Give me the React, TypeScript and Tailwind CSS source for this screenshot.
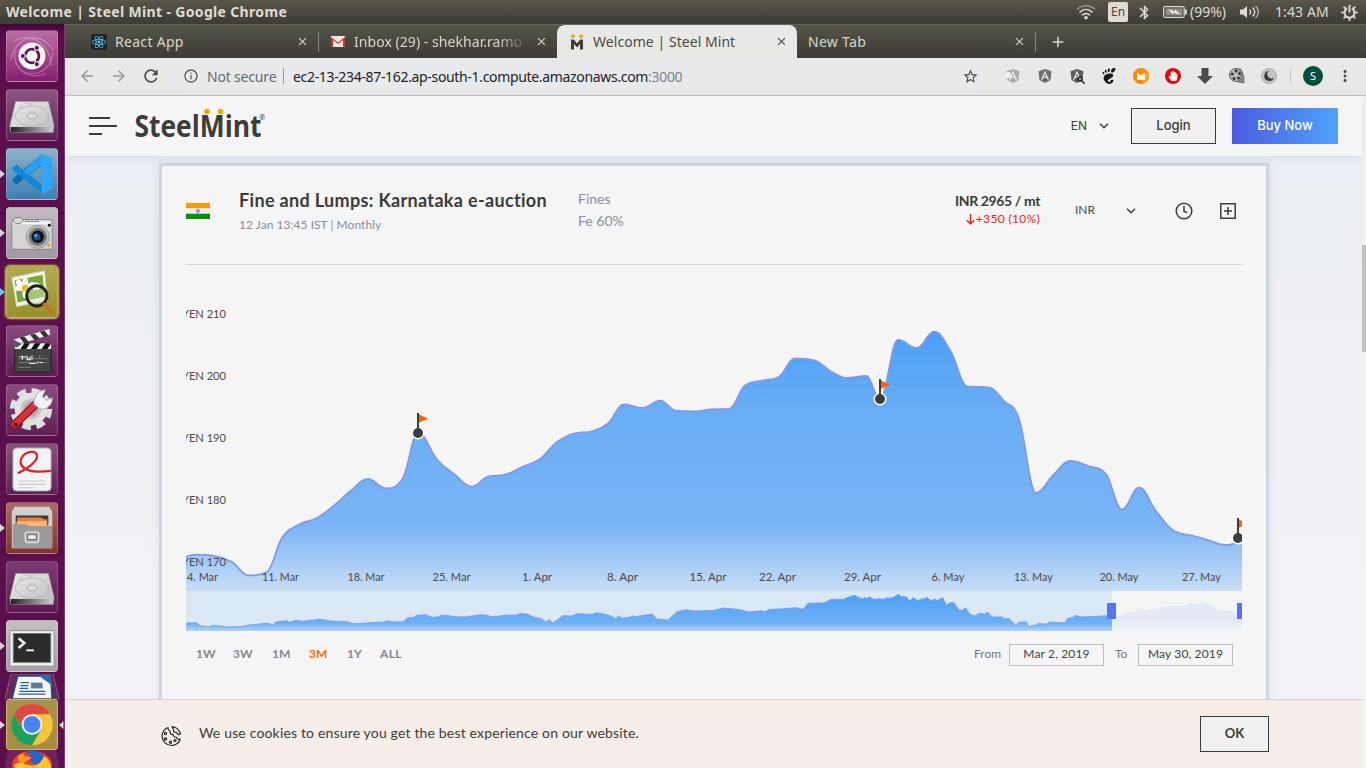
import React from "react";
import { MdArrowBack, MdArrowForward, MdRefresh, MdInfoOutline, MdStarBorder, MdMoreVert, MdClose, MdAdd, MdBluetooth } from "react-icons/md";
import { FaReact, FaAngular, FaHandPaper } from "react-icons/fa";
import { SiGnome } from "react-icons/si";

type Pt = [number, number];

const series: Pt[] = [
  [179, 560], [196, 554.7], [214, 556], [232, 562], [248, 575.3], [267, 572], [282, 538], [299, 524.5], [317, 518], [334, 505.5],
  [351, 490.5], [368, 479], [386, 488.3], [403, 478], [418, 433], [437, 459.5], [454, 474], [472, 486.7], [488, 476.5], [505, 474.7],
  [522, 467], [540, 459], [557, 442], [575, 433.3], [592, 431.3], [608, 423.5], [624, 404.5], [643, 408], [660, 400.7], [676, 410.7],
  [695, 411.3], [711, 409.3], [729, 408.8], [745, 385.5], [762, 380.7], [779, 376.7], [795, 358.5], [815, 360.5], [831, 371.5],
  [847, 378], [866, 376], [880, 399], [898, 340], [917, 348], [934, 331.7], [951, 352], [967, 386.3], [989, 387.3], [1004, 401],
  [1019, 419], [1036, 493], [1053, 475.5], [1070, 461], [1088, 466], [1106, 474], [1122, 509.7], [1139, 487.7], [1156, 511],
  [1174, 531], [1191, 535.3], [1208, 540], [1225, 545], [1242, 541],
];

const overviewLeft: Pt[] = [
  [15, 129], [40, 128], [50, 138], [60, 138], [70, 142], [78, 137], [100, 138], [110, 141], [150, 140], [175, 134], [215, 130],
  [228, 135], [236, 125], [262, 122], [268, 127], [284, 121], [300, 124], [345, 118], [370, 123], [410, 125], [425, 131], [500, 126],
  [508, 122], [520, 126], [547, 125], [557, 114], [572, 112], [580, 106], [600, 104], [618, 112], [632, 111], [640, 106], [655, 106],
  [670, 110], [700, 111], [735, 104], [755, 106], [760, 110], [778, 109], [795, 106], [825, 105], [835, 100], [852, 103], [865, 111],
  [885, 116], [897, 127], [903, 119], [915, 128], [938, 107], [960, 108], [972, 101], [1010, 103], [1022, 98], [1050, 105],
  [1068, 116], [1074, 108], [1082, 114], [1098, 113], [1108, 107], [1114, 111], [1130, 107], [1157, 102], [1168, 117], [1195, 120],
  [1218, 95], [1240, 89], [1260, 93], [1310, 91], [1330, 84], [1365, 88], [1395, 96], [1423, 92], [1432, 95], [1445, 88], [1468, 87],
];
const overviewRight: Pt[] = [
  [0, 327], [42, 323], [62, 328], [75, 310], [120, 308], [137, 298], [170, 298], [186, 290], [200, 286], [210, 292], [220, 297],
  [229, 292], [232, 296], [240, 290], [250, 298], [265, 296], [275, 298], [285, 294], [300, 294], [317, 283], [325, 290], [338, 290],
  [345, 301], [350, 300], [357, 293], [368, 302], [380, 296], [385, 298], [393, 292], [405, 302], [413, 297], [420, 302], [436, 293],
  [445, 316], [455, 308], [465, 308], [480, 331], [488, 330], [497, 324], [508, 343], [520, 348], [537, 339], [547, 343], [555, 336],
  [562, 345], [570, 351], [595, 351], [600, 356], [613, 356], [632, 377], [638, 367], [660, 366], [667, 382], [675, 376], [685, 376],
  [692, 370], [712, 373], [722, 366], [762, 369], [770, 355], [782, 353], [792, 346], [805, 351], [850, 349], [888, 346], [915, 347],
  [930, 338], [948, 335], [965, 325], [975, 331], [1000, 328], [1040, 318], [1080, 318], [1100, 309], [1115, 313], [1125, 306],
  [1138, 307], [1150, 318], [1160, 320], [1170, 333], [1180, 328], [1195, 334], [1205, 331], [1218, 341], [1236, 342],
];
const overview: Pt[] = [
  ...overviewLeft.map(([x, y]): Pt => [180 + x / 2.45, 580 + y / 3]),
  ...overviewRight.map(([x, y]): Pt => [780 + x / 2.676, 500 + y / 3]),
];

function spline(p: Pt[]): string {
  let d = `M${p[0][0]} ${p[0][1]}`;
  let outX = p[0][0];
  let outY = p[0][1];
  for (let i = 1; i < p.length; i++) {
    const [x, y] = p[i];
    const [lx, ly] = p[i - 1];
    let inX = x, inY = y, nextX = x, nextY = y;
    if (i < p.length - 1) {
      const [nx, ny] = p[i + 1];
      inX = (1.5 * x + lx) / 2.5;
      inY = (1.5 * y + ly) / 2.5;
      nextX = (1.5 * x + nx) / 2.5;
      nextY = (1.5 * y + ny) / 2.5;
      const c = ((nextY - inY) * (nextX - x)) / (nextX - inX) + y - nextY;
      inY += c;
      nextY += c;
      if (inY > ly && inY > y) { inY = Math.max(ly, y); nextY = 2 * y - inY; }
      else if (inY < ly && inY < y) { inY = Math.min(ly, y); nextY = 2 * y - inY; }
      if (nextY > ny && nextY > y) { nextY = Math.max(ny, y); inY = 2 * y - nextY; }
      else if (nextY < ny && nextY < y) { nextY = Math.min(ny, y); inY = 2 * y - nextY; }
    }
    d += `C${outX} ${outY} ${inX} ${inY} ${x} ${y}`;
    outX = nextX;
    outY = nextY;
  }
  return d;
}

const line = spline(series);
const overviewLine = "M" + overview.map(([x, y]) => `${x.toFixed(1)} ${y.toFixed(1)}`).join("L");

const yLabels: [string, number][] = [["YEN 210", 318], ["YEN 200", 380], ["YEN 190", 442], ["YEN 180", 504], ["YEN 170", 566]];
const xLabels: [string, number, number][] = [
  ["4. Mar", 202.5, 31], ["11. Mar", 280.5, 37], ["18. Mar", 366, 37], ["25. Mar", 451.5, 38], ["1. Apr", 537, 30], ["8. Apr", 622.5, 31],
  ["15. Apr", 708, 37], ["22. Apr", 777.5, 37], ["29. Apr", 862.5, 37], ["6. May", 948, 33], ["13. May", 1033.5, 39],
  ["20. May", 1119, 39], ["27. May", 1201.5, 39],
];

function Flag({ x, y }: { x: number; y: number }) {
  return (
    <g>
      <circle cx={x} cy={y} r="6.5" fill="#fff" />
      <path d={`M${x} ${y - 19}L${x + 10} ${y - 14.3}L${x} ${y - 10}Z`} fill="#ff6200" />
      <rect x={x - 1} y={y - 20} width="2" height="18" fill="#3c3c3b" />
      <circle cx={x} cy={y} r="5" fill="#3c3c3b" />
    </g>
  );
}

function Chart() {
  return (
    <svg viewBox="186 265 1056 366" className="block h-[366px] w-[1056px] overflow-hidden font-['Lato','Noto_Sans',sans-serif]">
      <defs>
        <linearGradient id="area" gradientUnits="userSpaceOnUse" x1="0" y1="331" x2="0" y2="591">
          <stop offset="0" stopColor="#4ba0f5" />
          <stop offset="0.3" stopColor="#68adf5" />
          <stop offset="0.75" stopColor="#7ab5f5" />
          <stop offset="1" stopColor="#c8ddf5" />
        </linearGradient>
        <linearGradient id="mini" gradientUnits="userSpaceOnUse" x1="0" y1="594" x2="0" y2="631">
          <stop offset="0" stopColor="#4ba0f5" />
          <stop offset="0.8" stopColor="#70b0f5" />
          <stop offset="1" stopColor="#b4d3f7" />
        </linearGradient>
        <linearGradient id="faded" gradientUnits="userSpaceOnUse" x1="0" y1="600" x2="0" y2="631">
          <stop offset="0" stopColor="#e0e9f5" />
          <stop offset="0.7" stopColor="#e5ebf5" />
          <stop offset="1" stopColor="#f0f2f5" />
        </linearGradient>
        <clipPath id="leftClip"><rect x="186" y="591" width="926" height="40" /></clipPath>
        <clipPath id="rightClip"><rect x="1112" y="591" width="130" height="40" /></clipPath>
      </defs>
      <path d={`${line}L1242 591L179 591Z`} fill="url(#area)" />
      <path d={line} fill="none" stroke="#8099e8" strokeWidth="1.8" />
      <rect x="186" y="591" width="926" height="40" fill="#dae7f5" />
      <g clipPath="url(#leftClip)">
        <path d={`${overviewLine}L1242 631L186 631Z`} fill="url(#mini)" />
        <path d={overviewLine} fill="none" stroke="#7d9ee8" strokeWidth="0.9" />
      </g>
      <path d={`${overviewLine}L1242 631L186 631Z`} fill="url(#faded)" clipPath="url(#rightClip)" />
      <rect x="1107" y="603" width="9" height="16" fill="#5574f2" />
      <rect x="1237" y="603" width="9" height="16" fill="#5574f2" />
      <g fill="#4a4a4a" fontSize="11">
        {yLabels.map(([t, y]) => (
          <text key={t} x="182" y={y} textLength="44" lengthAdjust="spacingAndGlyphs">{t}</text>
        ))}
        {xLabels.map(([t, x, w]) => (
          <text key={t} x={x - w / 2} y="581" textLength={w} lengthAdjust="spacingAndGlyphs">{t}</text>
        ))}
      </g>
      <Flag x={418} y={433} />
      <Flag x={880} y={399} />
      <Flag x={1238} y={538} />
    </svg>
  );
}

function Drive() {
  return (
    <svg viewBox="0 0 52 52" className="h-full w-full">
      <defs>
        <linearGradient id="drv" x1="0" y1="0" x2="1" y2="1"><stop stopColor="#eee" /><stop offset="1" stopColor="#b9b9b9" /></linearGradient>
        <linearGradient id="drvf" x1="0" x2="1"><stop stopColor="#222" /><stop offset="0.3" stopColor="#555" /><stop offset="1" stopColor="#ccc" /></linearGradient>
      </defs>
      <path d="M9 12h34l6 25-1 7H4l-1-7z" fill="url(#drv)" stroke="#999" strokeWidth=".6" />
      <path d="M4 38.500h44v5.500H4z" fill="url(#drvf)" />
      <ellipse cx="26" cy="27" rx="17.500" ry="10.500" fill="none" stroke="#b4b4b4" strokeWidth=".9" />
      <ellipse cx="26" cy="27" rx="5.500" ry="3" fill="#ddd" stroke="#aaa" />
      <path d="M12 19l4-5h10M11 19l10-2 8-4" fill="none" stroke="#c5c5c5" />
    </svg>
  );
}

function UbuntuIcon() {
  return (
    <svg viewBox="0 0 52 52" className="h-full w-full">
      <path d="M4 30C8 6 34-2 48 20M8 10C22 2 44 10 46 36M48 22C46 46 18 52 10 34M40 44C22 52 6 40 8 20" fill="none" stroke="#fff" strokeOpacity=".3" strokeWidth="1.200" />
      <circle cx="26" cy="26" r="14" fill="#f7f4f6" />
      <circle cx="26" cy="26" r="7.200" fill="none" stroke="#5e1a4e" strokeWidth="2.800" strokeDasharray="13.600 1.500" strokeDashoffset="-8" />
      <g fill="#5e1a4e" stroke="#f7f4f6" strokeWidth="1">
        <circle cx="16.500" cy="26" r="2.600" /><circle cx="31" cy="17.500" r="2.600" /><circle cx="31" cy="34.500" r="2.600" />
      </g>
    </svg>
  );
}

function CodeIcon() {
  return (
    <svg viewBox="0 0 52 52" className="h-full w-full">
      <path d="M5 33l5 4L37 16V5L8 29z" fill="#0a6ab5" />
      <path d="M5 20l5-4 27 22v8L7 23z" fill="#1088d4" />
      <path d="M36 5l11 5v31l-11 6V16L22 27l-5-4z" fill="#2b9ff0" />
      <path d="M36 5l11 5v31l-11 6z" fill="#2fa6f3" />
    </svg>
  );
}

function CameraIcon() {
  return (
    <svg viewBox="0 0 52 52" className="h-full w-full">
      <rect x="5" y="12" width="42" height="31" rx="2" fill="#d5d4d4" stroke="#888" />
      <path d="M6 14h39v3H6z" fill="#f4f4f4" />
      <ellipse cx="11.500" cy="13" rx="5" ry="3" fill="#ddd" stroke="#777" />
      <path d="M19 14h14" stroke="#555" strokeDasharray="2 1" />
      <circle cx="32" cy="30" r="12" fill="#bbb" stroke="#999" />
      <circle cx="32" cy="30" r="9.500" fill="#777" />
      <circle cx="32" cy="30" r="6.500" fill="#111" />
      <circle cx="31" cy="30" r="3.800" fill="#1c4f9c" />
      <circle cx="30" cy="28.500" r="1.300" fill="#8ab8f0" />
      <circle cx="44" cy="18" r="1.500" fill="#111" /><path d="M42 37h3v3h-3z" fill="#f19a25" />
    </svg>
  );
}

function ViewerIcon() {
  return (
    <svg viewBox="0 0 52 52" className="h-full w-full">
      <path d="M5 11l34-7 3 31-32 6z" fill="#f4f4ee" stroke="#ccc" />
      <path d="M8 14l29-6 2 23-28 6z" fill="#78a83c" />
      <g fill="#fff">
        <ellipse cx="19" cy="16" rx="3" ry="5" /><ellipse cx="19" cy="28" rx="3" ry="4.500" />
        <ellipse cx="13" cy="22" rx="4.500" ry="3" /><ellipse cx="25" cy="19" rx="4.500" ry="3" transform="rotate(-25 25 19)" />
        <ellipse cx="13" cy="17" rx="4" ry="3" transform="rotate(40 13 17)" /><ellipse cx="30" cy="20" rx="5" ry="4" />
      </g>
      <circle cx="19" cy="22" r="3.500" fill="#ecc01d" />
      <circle cx="31" cy="30" r="10.500" fill="#dcecc0" fillOpacity=".45" stroke="#222" strokeWidth="3" />
      <path d="M39 39l8 8" stroke="#c1752a" strokeWidth="4" strokeLinecap="round" />
    </svg>
  );
}

function ClapperIcon() {
  return (
    <svg viewBox="0 0 52 52" className="h-full w-full">
      <path d="M7 14L44 3l1 6L9 20z" fill="#eee" />
      <path d="M13 12l5 6 5-1-5-6zM24 9l5 6 5-2-5-5zM34 6l5 6 4-2-4-5z" fill="#333" />
      <rect x="8" y="18" width="38" height="30" rx="1.500" fill="#444" stroke="#222" />
      <path d="M8 18h38v6H8z" fill="#eee" />
      <path d="M18 18l-4 6h6l4-6zM29 18l-4 6h6l4-6zM40 18l-4 6h6l4-6z" fill="#111" />
      <path d="M7 14l8 5-6 4z" fill="#555" />
      <path d="M12 34h30M12 38h30M12 43h13M34 30v4" stroke="#888" strokeWidth=".8" />
      <path d="M13 32h7m-4-1v4m5-4v4h3v-3m2 3v-4m-3 8h7m2-2v2m2-1h3" stroke="#eee" strokeWidth="1.200" fill="none" />
    </svg>
  );
}

function SettingsIcon() {
  return (
    <svg viewBox="0 0 52 52" className="h-full w-full">
      <circle cx="25" cy="25" r="18" fill="none" stroke="#dedede" strokeWidth="8" strokeDasharray="8.500 5.640" />
      <circle cx="25" cy="25" r="14" fill="#c9c9c9" stroke="#e2e2e2" strokeWidth="6" />
      <circle cx="25" cy="25" r="8" fill="#b5a7b2" />
      <path d="M8 41L31 19" stroke="#991218" strokeWidth="8.500" strokeLinecap="round" />
      <path d="M8 41L31 19" stroke="#d8333a" strokeWidth="6" strokeLinecap="round" />
      <path d="M28 20c-1-8 5-15 12-15l-3 7 4 4 6-3c1 8-6 13-13 12z" fill="#f1f1f1" stroke="#999" strokeWidth=".8" />
      <circle cx="9" cy="41" r="2" fill="#6d0d12" />
    </svg>
  );
}

function PdfIcon() {
  return (
    <svg viewBox="0 0 52 52" className="h-full w-full">
      <rect x="6" y="4" width="40" height="45" rx="4" fill="#f3f3f3" stroke="#8a8a8a" />
      <path d="M12 30C22 26 33 17 31 11c-2-5-13-3-16 4-4 10 7 16 30 13" fill="none" stroke="#d8272e" strokeWidth="2.400" strokeLinecap="round" />
      <path d="M12 38.500h28M12 42h28M12 45.500h17" stroke="#c8c8c8" strokeWidth="1.200" />
    </svg>
  );
}

function FilesIcon() {
  return (
    <svg viewBox="0 0 52 52" className="h-full w-full">
      <path d="M8 4h36l3 5v38H5V9z" fill="#d0d0d0" />
      <rect x="9" y="13" width="34" height="10" fill="#3b3b3b" />
      <path d="M11 15h25l2 2h4v7H9z" fill="#e8823a" /><path d="M11 19h30v5H11z" fill="#f5b47c" />
      <path d="M6 22h14l2 2h25v21a2 2 0 01-2 2H8a2 2 0 01-2-2z" fill="#9a9a9a" />
      <rect x="19" y="30" width="14" height="11" rx="2" fill="#a9a9a9" stroke="#ddd" strokeWidth="1.500" />
      <rect x="21.500" y="33" width="9" height="5" fill="#eee" stroke="#666" />
    </svg>
  );
}

function TerminalIcon() {
  return (
    <svg viewBox="0 0 52 52" className="h-full w-full">
      <rect x="3" y="10" width="46" height="37" rx="1" fill="#f1f1f1" stroke="#888" />
      <rect x="6.500" y="13" width="39" height="30" fill="#2c2c2c" stroke="#777" />
      <path d="M12 18l6 5-6 5" fill="none" stroke="#eee" strokeWidth="2.600" /><path d="M20 30.500h8" stroke="#eee" strokeWidth="2" />
    </svg>
  );
}

function ChromeIcon() {
  return (
    <svg viewBox="0 0 52 52" className="h-full w-full">
      <circle cx="26" cy="26" r="22" fill="#f2c63c" />
      <path d="M6.900 15A22 22 0 0145.100 15H26L16.500 31.500z" fill="#dd4b3e" />
      <path d="M6.900 15A22 22 0 0026 48L35.500 31.500 16.500 31.500z" fill="#1fa15d" />
      <circle cx="26" cy="26" r="11" fill="#f3f3f3" /><circle cx="26" cy="26" r="9" fill="#4684ee" />
    </svg>
  );
}

const launcher: { el: React.ReactNode; tile: string; arrow?: string }[] = [
  { el: <UbuntuIcon />, tile: "bg-linear-to-b from-[#b96da3] to-[#861a70]" },
  { el: <Drive />, tile: "bg-linear-to-b from-[#8d5584] to-[#5d2052]" },
  { el: <CodeIcon />, tile: "bg-linear-to-b from-[#8eb0cb] to-[#3c7fae]", arrow: "text-[#d8d5d6]" },
  { el: <CameraIcon />, tile: "bg-linear-to-b from-[#c2bdc2] to-[#a297a2]", arrow: "text-[#d8d5d6]" },
  { el: <ViewerIcon />, tile: "bg-linear-to-b from-[#b0ac4c] to-[#969129] shadow-[0_0_2px_1px_#d9cf4a]", arrow: "text-[#6fc3ee]" },
  { el: <ClapperIcon />, tile: "bg-linear-to-b from-[#8c4c81] to-[#5b1a50]" },
  { el: <SettingsIcon />, tile: "bg-linear-to-b from-[#8c4c81] to-[#5f1f53]" },
  { el: <PdfIcon />, tile: "bg-linear-to-b from-[#8c5080] to-[#5f2053]" },
  { el: <FilesIcon />, tile: "bg-linear-to-b from-[#a56b64] to-[#853329]", arrow: "text-[#d8d5d6]" },
  { el: <Drive />, tile: "bg-linear-to-b from-[#7c3a72] to-[#5d1a52]" },
  { el: <TerminalIcon />, tile: "bg-linear-to-b from-[#c5bfc4] to-[#a79fa6]", arrow: "text-[#d8d5d6]" },
];

function Arrow({ tone, flip }: { tone?: string; flip?: boolean }) {
  return (
    <svg viewBox="0 0 6 8" className={`h-2 w-[6px] shrink-0 ${tone ?? "invisible"}`}>
      <path d={flip ? "M5.500 0v8L1 4z" : "M0 0v8L5 4z"} fill="currentColor" />
    </svg>
  );
}

function Launcher() {
  return (
    <aside className="flex h-full w-[65px] shrink-0 flex-col overflow-hidden border-r border-[#7b3a70] bg-linear-to-b from-[#3c0a33] via-[#5b0f4d] via-[2%] to-[#5b0f4d] pt-[6px]">
      <div className="flex flex-col gap-[7px]">
        {launcher.map((item, i) => (
          <div key={i} className="flex items-center">
            <Arrow tone={item.arrow} />
            <div className={`h-[52px] w-[52px] rounded-[4px] border border-white/20 ${item.tile}`}>{item.el}</div>
          </div>
        ))}
      </div>
      <svg viewBox="0 0 56 26" className="ml-1 mt-[2px] block h-[25px] w-14 shrink-0">
        <path d="M6 0h44l6 26H0z" fill="#66275b" stroke="#9b6a93" strokeWidth=".8" />
        <path d="M13 2h28l7 7 1 17H7z" fill="#f5f5f5" stroke="#1b4f80" strokeWidth="1.800" />
        <path d="M34 1h13l2 11z" fill="#2e6da0" />
        <path d="M16 9h9M16 12h8M15 15h9M15 18h27M14 21h28" stroke="#2b6290" strokeWidth="1.300" /><path d="M27 9h12v6H27z" fill="#567e9c" />
      </svg>
      <div className="flex items-center">
        <Arrow tone="text-[#d8d5d6]" />
        <div className="h-[51px] w-[52px] rounded-[3px] border border-[#cbb672] bg-linear-to-b from-[#a9914d] to-[#a58c42]"><ChromeIcon /></div>
        <Arrow tone="text-[#d8d5d6]" flip />
      </div>
      <svg viewBox="0 0 56 22" className="ml-1 block h-[22px] w-14 shrink-0">
        <path d="M4 0h48l4 22H0z" fill="#6f2460" />
        <ellipse cx="28" cy="15" rx="20" ry="14" fill="#e8412d" />
        <path d="M22 2c8-3 17 0 20 8l-8 5-8-3 2-5z" fill="#2365c8" />
        <path d="M20 2c-3 4 3 5 7 5-2 4-6 3-7 7-5-1-7-4-6-8z" fill="#f79a20" />
        <path d="M10 15c5-4 10-1 14 0 7 2 12 0 16-9 6 3 8 10 7 16H12z" fill="#ffc52e" />
      </svg>
    </aside>
  );
}

function SystemBar() {
  return (
    <div className="flex h-6 shrink-0 items-center justify-between bg-linear-to-b from-[#5a564b] to-[#3d3b36] text-[#dfdbd2]">
      <div className="w-[300px] whitespace-nowrap pl-[6px] text-[14px] font-bold leading-6 tracking-[0.34px]">Welcome | Steel Mint - Google Chrome</div>
      <div className="flex h-6 items-center pr-2 text-[14px]">
        <svg viewBox="0 0 20 16" className="mr-3 h-4 w-5" fill="none" stroke="currentColor" strokeWidth="1.600">
          <path d="M1 5.500c5-5 13-5 18 0" opacity=".5" /><path d="M3.500 8.500c4-4 9-4 13 0M6 11.300c2.500-2.500 5.500-2.500 8 0" /><circle cx="10" cy="13.800" r="1" fill="currentColor" />
        </svg>
        <span className="mr-2 flex h-5 w-5 items-center justify-center rounded-[2px] bg-[#dfdbd2] text-[12px] text-[#4a4842]">En</span>
        <MdBluetooth className="mr-[10px] h-[17px] w-[17px]" />
        <svg viewBox="0 0 24 12" className="mr-[3px] h-3 w-6"><rect x=".7" y=".7" width="20.500" height="10.600" rx="1.500" fill="none" stroke="currentColor" strokeWidth="1.200" /><rect x="2.500" y="2.500" width="17" height="7" fill="#918e86" /><path d="M22 3.500h1.800v5H22z" fill="currentColor" /><path d="M5 3l7 2.500V3.300L17.500 9 10 6.500v2z" fill="#eee" /></svg>
        <span className="w-[38px] pb-px">(99%)</span>
        <svg viewBox="0 0 20 16" className="ml-3 h-4 w-5" fill="none" stroke="currentColor" strokeWidth="1.400">
          <path d="M0 5.500h3L7 2v12L3 10.500H0z" fill="currentColor" stroke="none" /><path d="M9.500 5.500c1.500 1.500 1.500 3.500 0 5M12.500 3.500c3 3 3 6 0 9" /><path d="M15.500 2c4 4 4 8 0 12" opacity=".7" />
        </svg>
        <span className="ml-[15px] w-[55px] whitespace-nowrap pb-px tracking-[0.1px]">1:43 AM</span>
        <svg viewBox="0 0 18 18" className="ml-[11px] h-[17px] w-[17px]" fill="none" stroke="currentColor"><path d="M6.500 4.500a5.300 5.300 0 105 0" strokeWidth="2.200" /><path d="M9 1v8" strokeWidth="2" /><path d="M9 15v3M0 9h3M15 9h3M2.700 15.300L4.800 13.200M15.300 15.300l-2.100-2.100M2.700 2.700l2.100 2.100M15.300 2.700l-2.100 2.100" strokeWidth="1.800" /></svg>
      </div>
    </div>
  );
}

function MintMark() {
  return (
    <svg viewBox="0 0 16 16" className="h-4 w-4 shrink-0">
      <path d="M2 15.500V5.500h3l3 4 3-4h3v10h-3V10l-3 3.500L5 10v5.500z" fill="#3f3f42" /><circle cx="3.800" cy="2.200" r="1.900" fill="#e5b015" /><circle cx="12.200" cy="2.200" r="1.900" fill="#e5b015" />
    </svg>
  );
}

function Tabs() {
  return (
    <div className="flex h-[34px] shrink-0 items-center border-t border-[#66665b] bg-linear-to-b from-[#55554a] to-[#3c3b36] text-[14px] text-[#d7d6c8]">
      <div className="flex h-full w-[254px] items-center border-[#8a887c] pl-[26px]">
        <span className="flex h-4 w-4 items-center justify-center rounded-[2px] bg-[#20232a]"><FaReact className="h-[14px] w-[14px] text-[#61dafb]" /></span>
        <span className="ml-2 flex-1 pb-px tracking-[0.3px]">React App</span>
        <MdClose className="mr-[9px] h-[13px] w-[13px]" />
        <span className="h-5 w-px bg-[#8a887c]" />
      </div>
      <div className="flex h-full w-[238px] items-center pl-3">
        <svg viewBox="0 0 14 11" className="h-[11px] w-[14px]"><path d="M0 0h14v11H0z" fill="#e8e8e8" /><path d="M0 11V1l7 5.500L14 1v10h-2V4L7 8 2 4v7z" fill="#d93025" /></svg>
        <span className="ml-[9px] w-[174px] overflow-hidden whitespace-nowrap pb-px tracking-[0.05px] [mask-image:linear-gradient(to_right,#000_82%,transparent)]">Inbox (29) - shekhar.ramo</span>
        <MdClose className="ml-[7px] h-[13px] w-[13px]" />
      </div>
      <div className="flex h-full w-[240px] items-center rounded-t-lg bg-[#e8e8e6] pl-3 text-[#4c4a45]">
        <MintMark />
        <span className="ml-2 flex-1 pb-px tracking-[0.05px]">Welcome | Steel Mint</span>
        <MdClose className="mr-[9px] h-[13px] w-[13px]" />
      </div>
      <div className="flex h-full w-[239px] items-center pl-[11px]">
        <span className="flex-1 pb-px tracking-[0.3px]">New Tab</span>
        <MdClose className="mr-[9px] h-[13px] w-[13px]" />
        <span className="h-5 w-px bg-[#8a887c]" />
      </div>
      <MdAdd className="ml-[13px] h-[18px] w-[18px]" />
    </div>
  );
}

function Toolbar() {
  return (
    <div className="flex h-[38px] shrink-0 items-center border-b border-[#c5c5c2] bg-[#e8e8e6] pb-px pl-[13px] pr-3 text-[#4a4a48]">
      <MdArrowBack className="h-[18px] w-[18px] text-[#9b9b98]" />
      <MdArrowForward className="ml-[14px] h-[18px] w-[18px] text-[#9b9b98]" />
      <MdRefresh className="ml-[13px] h-5 w-5" />
      <div className="ml-[4px] flex h-7 w-[825px] items-center rounded-full bg-[#e7e9eb] pl-[18px] pr-[11px] text-[14px]">
        <MdInfoOutline className="h-4 w-4 text-[#5a5c5f]" />
        <span className="ml-2 w-[69px] whitespace-nowrap tracking-[-0.18px] text-[#66686b]">Not secure</span>
        <span className="ml-[7px] mr-[9px] h-4 w-px bg-[#96989b]" />
        <span className="whitespace-nowrap tracking-[-0.33px] text-[#201f24]">ec2-13-234-87-162.ap-south-1.compute.amazonaws.com<span className="text-[#808285]">:3000</span></span>
        <MdStarBorder className="ml-auto h-[17px] w-[17px]" />
      </div>
      <div className="ml-[15px] flex items-center gap-4">
        <span className="relative flex h-4 w-4 items-center justify-center text-[#ababab]"><FaAngular className="h-4 w-4" /><span className="absolute left-0 top-1 h-[6px] w-[6px] rounded-full bg-[#f3f3f3]" /></span>
        <FaAngular className="h-4 w-4 text-[#6d6d6d]" />
        <span className="relative flex h-4 w-4 text-[#5c5c5c]"><FaAngular className="h-4 w-4" /><svg viewBox="0 0 8 8" className="absolute bottom-0 right-0 h-2 w-2" fill="none" stroke="#222" strokeWidth="1.500"><circle cx="3" cy="3" r="2" fill="#aaa" /><path d="M4.500 4.500L8 8" /></svg></span>
        <SiGnome className="h-4 w-4 text-[#151515]" />
        <svg viewBox="0 0 16 16" className="h-4 w-4"><circle cx="8" cy="8" r="8" fill="#f78a08" /><path d="M8 8l4-4 4 4-5 7z" fill="#ffb10a" /><path d="M4 4.500l4 3 4-3V12H4z" fill="#fff3dc" /></svg>
        <span className="flex h-4 w-4 items-center justify-center rounded-full bg-[#e40613] text-white"><FaHandPaper className="h-[10px] w-[10px]" /></span>
        <svg viewBox="0 0 16 16" className="h-4 w-4"><path d="M4.500 0h7v8H16l-8 8-8-8h4.500z" fill="#4c4c4c" /></svg>
        <svg viewBox="0 0 16 16" className="h-4 w-4"><circle cx="7" cy="7" r="6.500" fill="#bbb" stroke="#555" /><g fill="#333"><circle cx="7" cy="3" r="1.500" /><circle cx="3.300" cy="6" r="1.500" /><circle cx="5" cy="10.500" r="1.500" /><circle cx="9.500" cy="10" r="1.500" /><circle cx="10.500" cy="5.500" r="1.500" /></g><path d="M9 1h3l3 8v6l-6-1 3-3V5z" fill="#8a8a8a" stroke="#555" strokeWidth=".6" /></svg>
        <svg viewBox="0 0 16 16" className="h-4 w-4"><circle cx="8" cy="8" r="7.600" fill="#c4c4c4" stroke="#aaa" strokeWidth=".8" /><path d="M8 3a5 5 0 105 6.500A4 4 0 018 3z" fill="#3f3f3f" /></svg>
      </div>
      <span className="ml-[13px] h-4 w-px bg-[#c5c5c2]" />
      <span className="ml-3 flex h-5 w-5 items-center justify-center rounded-full bg-[#00503d] text-[11px] text-white">S</span>
      <MdMoreVert className="ml-auto h-[18px] w-[18px]" />
    </div>
  );
}

function Chevron({ className }: { className: string }) {
  return (
    <svg viewBox="0 0 10 6" className={`h-[6px] w-[10px] ${className}`} fill="none" stroke="#3c3c3b" strokeWidth="1.500"><path d="M1 .8l4 4 4-4" /></svg>
  );
}

function SiteHeader() {
  return (
    <header className="flex h-[60px] shrink-0 items-center bg-[#f5f5f5] pl-6 pr-6 font-['Lato','Noto_Sans',sans-serif] text-[#3c3c3b] shadow-[0_1px_9px_rgba(90,90,150,.13)]">
      <svg viewBox="0 0 28 18" className="h-[18px] w-7" fill="#3c3c3b"><path d="M0 0h21v2H0zM0 8h28v2H0zM0 16h13v2H0z" /></svg>
      <svg viewBox="134 106 132 40" className="ml-[17px] h-10 w-[132px] font-['Open_Sans','Noto_Sans',sans-serif]" fill="#3c3c3b">
        <text x="134.500" y="136.500" fontSize="30" fontWeight="700" textLength="127" lengthAdjust="spacingAndGlyphs">SteelMint</text>
        <circle cx="207" cy="111.500" r="2.800" fill="#e5ac00" /><circle cx="220.500" cy="111.500" r="2.800" fill="#e5ac00" />
        <text x="259" y="120" fontSize="7.500">®</text>
      </svg>
      <span className="ml-auto text-[12px] font-['Inter',sans-serif]">EN</span>
      <Chevron className="ml-3" />
      <button className="ml-[22px] flex h-9 w-[85px] items-center justify-center border border-[#3c3c3b] bg-[#f1f1f1] font-['Inter',sans-serif] text-[13px] font-medium">Login</button>
      <button className="ml-4 flex h-9 w-[106px] items-center justify-center bg-linear-to-r from-[#4b5ae0] to-[#4ea2f8] font-['Inter',sans-serif] text-[13px] font-medium text-white">Buy Now</button>
    </header>
  );
}

function ChartCard() {
  return (
    <section className="ml-[94px] mt-[7px] h-[560px] w-[1110px] shrink-0 border-[3px] border-[#ced7e0] bg-[#f5f5f5] px-6 shadow-[0_0_8px_rgba(90,110,140,.15)]">
      <div className="flex h-[99px] border-b border-[#d3d5dc]">
        <svg viewBox="0 0 24 16" className="mt-[37px] h-4 w-6 shrink-0"><path d="M0 0h24v5.500H0z" fill="#f79a00" /><path d="M0 5.300h24V11H0z" fill="#f0f0f0" /><path d="M0 10.700h24V16H0z" fill="#039403" /><path d="M12 5.300L14.700 8 12 10.700 9.300 8z" fill="#a58bd0" /></svg>
        <div className="ml-[29px] mt-[22px] w-[339px] shrink-0">
          <h2 className="whitespace-nowrap text-[18px] font-bold leading-6 tracking-[0.33px] text-[#3c3c3b]">Fine and Lumps: Karnataka e-auction</h2>
          <p className="mt-[5px] text-[12px] leading-4 tracking-[0.04px] text-[#8a8d9a]">12 Jan 13:45 IST | Monthly</p>
        </div>
        <div className="mt-[22px] text-[14px] leading-[22px] text-[#8a8d9a]">
          <p>Fines</p>
          <p>Fe 60%</p>
        </div>
        <div className="ml-auto mr-[35px] mt-[25px] text-right">
          <p className="text-[14px] font-bold leading-5 tracking-[-0.38px] text-[#3c3c3b]">INR 2965 / mt</p>
          <p className="flex items-center justify-end text-[12px] leading-4 tracking-[0.33px] text-[#fb1616]">
            <svg viewBox="0 0 9 11" className="mr-px h-[11px] w-[9px]" fill="none" stroke="currentColor" strokeWidth="1.300"><path d="M4.500 0v10M.8 6.300l3.700 3.700 3.700-3.700" /></svg>
            +350 (10%)
          </p>
        </div>
        <span className="mt-[36px] w-[21px] text-[12px] leading-4 text-[#4b4b4b]">INR</span>
        <Chevron className="ml-[30px] mt-[42px]" />
        <svg viewBox="0 0 18 18" className="ml-[39px] mt-[36px] h-[18px] w-[18px]" fill="none" stroke="#3c3c3b" strokeWidth="1.500"><circle cx="9" cy="9" r="7.800" /><path d="M9 4v5.500l3.300 1" /></svg>
        <svg viewBox="0 0 16 16" className="ml-[27px] mr-[6px] mt-[37px] h-4 w-4" fill="none" stroke="#3c3c3b" strokeWidth="1.500"><path d="M.8.8h14.400v14.400H.8zM8 4v8M4 8h8" /></svg>
      </div>
      <Chart />
      <div className="mt-[13px] flex h-[22px] items-center text-[12px]">
        <div className="flex pb-[2px] font-bold text-[#85878f]">
          <span className="ml-[10px] w-[37px]">1W</span>
          <span className="w-[39px]">3W</span>
          <span className="w-[37px]">1M</span>
          <span className="w-[38px] text-[#ff6a00]">3M</span>
          <span className="w-[33px]">1Y</span>
          <span className="tracking-[0.3px]">ALL</span>
        </div>
        <div className="ml-auto mr-[9px] flex items-center text-[#777]">
          <span className="w-[35px] pb-[2px]">From</span>
          <span className="flex h-[22px] w-[95px] items-center justify-center border border-[#bcbcbc] pb-[2px] tracking-[0.15px] text-[#444]">Mar 2, 2019</span>
          <span className="ml-[11px] w-[23px] pb-[2px]">To</span>
          <span className="flex h-[22px] w-[95px] items-center justify-center border border-[#bcbcbc] pb-[2px] tracking-[0.15px] text-[#444]">May 30, 2019</span>
        </div>
      </div>
    </section>
  );
}

function CookieBar() {
  return (
    <footer className="flex h-[69px] shrink-0 items-center border-t border-[#d2d2d5] bg-[#f5eee8] pl-[95px] pr-[93px] text-[#3c3c3b]">
      <svg viewBox="0 0 22 22" className="mt-1 h-[22px] w-[22px]" fill="none" stroke="#262626" strokeWidth="1.200" strokeLinejoin="round">
        <path d="M8 2.500A9.300 9.300 0 1020.300 14c-1.800.8-3.500 0-4-1.800-2 .3-3.300-1-3-2.700-2.300.3-3.600-1.200-3-3C8.500 5.800 7.700 4.300 8 2.500z" />
        <circle cx="5.500" cy="8.500" r="1.100" /><circle cx="5.500" cy="14" r="1.100" /><circle cx="10.500" cy="17.300" r="1.100" /><circle cx="15" cy="15.500" r="1" />
        <path d="M9.300 11.300h.1M12 1.500c3.500.3 7 3 8.500 7.500l-2.500.6-1.500-2.100-2.500-.4-.5-2.600z" />
      </svg>
      <p className="ml-[17px] pb-[3px] text-[14px] tracking-[0.165px]">We use cookies to ensure you get the best experience on our website.</p>
      <button className="ml-auto flex h-9 w-[69px] items-center justify-center border border-[#3c3c3b] bg-[#f1f1f1] text-[13px] font-bold">OK</button>
    </footer>
  );
}

export default function App() {
  return (
    <div className="flex h-[768px] w-[1366px] flex-col overflow-hidden bg-[#f5f5f5] font-['Noto_Sans',sans-serif]">
      <SystemBar />
      <div className="flex h-[744px]">
        <Launcher />
        <div className="flex w-[1301px] flex-col">
          <Tabs />
          <Toolbar />
          <div className="flex h-[672px]">
            <div className="flex w-[1297px] flex-col font-['Lato','Noto_Sans',sans-serif]">
              <div className="z-10"><SiteHeader /></div>
              <main className="flex h-[543px] shrink-0 flex-col overflow-hidden bg-linear-to-b from-[#ebeef4] to-[#f2f3f6]">
                <ChartCard />
              </main>
              <CookieBar />
            </div>
            <div className="w-1 bg-[#f3f3f3] pt-[149px]"><div className="h-[107px] bg-[#c1c1c1]" /></div>
          </div>
        </div>
      </div>
    </div>
  );
}
